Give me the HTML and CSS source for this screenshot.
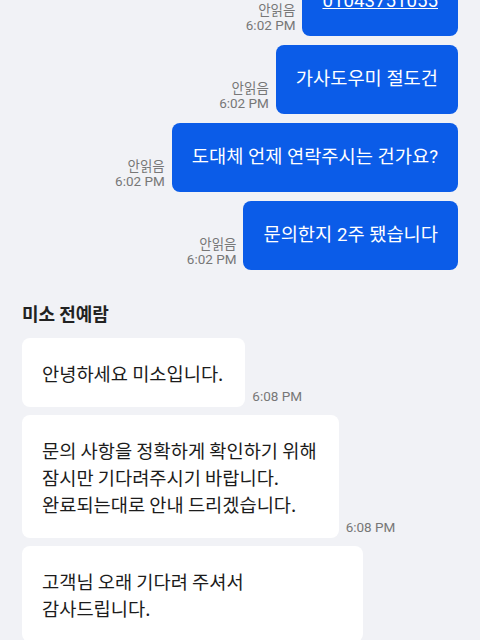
FILE: index.html
```html
<!DOCTYPE html>
<html>
<head>
    <title>채팅</title>
    <link rel="stylesheet" href="styles.css">
</head>
<body>
    <div class="chat">
        <div class="row sent">
            <div class="meta"><span>안읽음</span><span>6:02 PM</span></div>
            <div class="bubble"><a class="link">01043751055</a></div>
        </div>
        <div class="row sent">
            <div class="meta"><span>안읽음</span><span>6:02 PM</span></div>
            <div class="bubble">가사도우미 절도건</div>
        </div>
        <div class="row sent">
            <div class="meta"><span>안읽음</span><span>6:02 PM</span></div>
            <div class="bubble">도대체 언제 연락주시는 건가요?</div>
        </div>
        <div class="row sent">
            <div class="meta"><span>안읽음</span><span>6:02 PM</span></div>
            <div class="bubble">문의한지 2주 됐습니다</div>
        </div>

        <div class="sender">미소 전예람</div>
        <div class="row recv">
            <div class="bubble">안녕하세요 미소입니다.</div>
            <div class="meta"><span>6:08 PM</span></div>
        </div>
        <div class="row recv">
            <div class="bubble">문의 사항을 정확하게 확인하기 위해<br>잠시만 기다려주시기 바랍니다.<br>완료되는대로 안내 드리겠습니다.</div>
            <div class="meta"><span>6:08 PM</span></div>
        </div>
        <div class="row recv">
            <div class="bubble wide">고객님 오래 기다려 주셔서<br>감사드립니다.</div>
        </div>
    </div>
</body>
</html>
```

FILE: styles.css
```css
body {
    margin: 0;
    background-color: #f1f2f6;
    font-family: Roboto, "Noto Sans CJK KR", sans-serif;
    overflow: hidden;
}
.chat {
    margin-top: -33px;
    padding: 0 22px;
}
.row {
    display: flex;
    align-items: flex-end;
    gap: 7px;
}
.row.sent {
    justify-content: flex-end;
    margin-bottom: 9px;
}
.row.recv {
    justify-content: flex-start;
    margin-bottom: 8px;
}
.bubble {
    padding: 21px 20px;
    border-radius: 8px;
    line-height: 27px;
    font-size: 18.7px;
}
.sent .bubble {
    background-color: #0b5ce8;
    color: #ffffff;
}
.recv .bubble {
    background-color: #ffffff;
    color: #1c1c1c;
    font-family: "Noto Sans CJK KR", sans-serif;
    padding-right: 22px;
}
.bubble.wide {
    min-width: 299px;
}
.link {
    color: #ffffff;
    text-decoration: underline;
}
.meta {
    display: flex;
    flex-direction: column;
    align-items: flex-end;
    font-size: 13.5px;
    line-height: 15px;
    color: #777777;
    padding-bottom: 3px;
}
.sender {
    margin-top: 31px;
    margin-bottom: 13px;
    font-size: 18px;
    font-weight: bold;
    line-height: 24px;
    color: #222222;
    font-family: "Noto Sans CJK KR", sans-serif;
}
```
